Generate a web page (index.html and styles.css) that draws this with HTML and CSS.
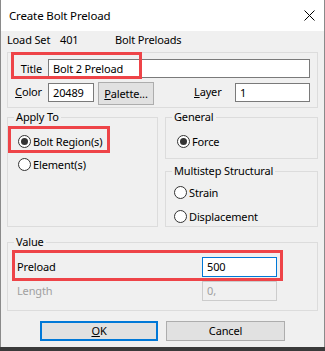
FILE: index.html
```html
<!DOCTYPE html>
<html>
<head>
<meta charset="utf-8">
<link rel="stylesheet" href="styles.css">
</head>
<body>
<div class="window">
  <div class="titlebar">
    <span class="title">Create Bolt Preload</span>
    <svg class="close" width="11" height="11" viewBox="0 0 11 11"><path d="M0.5 0.5 L10.5 10.5 M10.5 0.5 L0.5 10.5" stroke="#000" stroke-width="1" fill="none"/></svg>
  </div>
  <div class="content">
    <div class="loadset">
      <span class="ls-label">Load Set</span>
      <span class="ls-id">401</span>
      <span class="ls-name">Bolt Preloads</span>
    </div>

    <div class="group main-group">
      <div class="row title-row">
        <span class="lbl">Title</span>
        <div class="edit title-edit">Bolt 2 Preload</div>
      </div>
      <div class="row color-row">
        <span class="lbl"><u>C</u>olor</span>
        <div class="edit color-edit">20489</div>
        <div class="btn palette"><u>P</u>alette...</div>
        <span class="layer-lbl"><u>L</u>ayer</span>
        <div class="edit layer-edit">1</div>
      </div>
    </div>

    <div class="cols">
      <div class="group apply">
        <span class="legend">Apply To</span>
        <div class="radio-row"><span class="radio checked"></span><span>Bolt Region(s)</span></div>
        <div class="radio-row"><span class="radio"></span><span>Element(s)</span></div>
      </div>
      <div class="right-col">
        <div class="group general">
          <span class="legend">General</span>
          <div class="radio-row"><span class="radio checked"></span><span>Force</span></div>
        </div>
        <div class="group multistep">
          <span class="legend">Multistep Structural</span>
          <div class="radio-row"><span class="radio"></span><span>Strain</span></div>
          <div class="radio-row"><span class="radio"></span><span>Displacement</span></div>
        </div>
      </div>
    </div>

    <div class="group value">
      <span class="legend">Value</span>
      <div class="val-row">
        <span class="val-lbl">Preload</span>
        <div class="edit val-edit focused">500</div>
      </div>
      <div class="val-row len-row">
        <span class="val-lbl disabled">Length</span>
        <div class="edit val-edit disabled-edit">0,</div>
      </div>
    </div>

    <div class="buttons">
      <div class="btn ok default"><u>O</u>K</div>
      <div class="btn cancel">Cancel</div>
    </div>
  </div>

  <div class="mark mark-title"></div>
  <div class="mark mark-bolt"></div>
  <div class="mark mark-preload"></div>
</div>
</body>
</html>
```

FILE: styles.css
```css
* { box-sizing: border-box; }
html, body { margin: 0; padding: 0; }
body {
  width: 325px;
  height: 351px;
  background: #3a3a3a;
  font-family: "Noto Sans", "DejaVu Sans", sans-serif;
  font-size: 11px;
  letter-spacing: -0.15px;
  color: #000;
  overflow: hidden;
}
.window {
  position: relative;
  width: 325px;
  height: 347px;
  background: #f0f0f0;
  border-left: 1px solid #8a8a8a;
  border-right: 1px solid #8a8a8a;
}
.titlebar {
  height: 31px;
  background: #fff;
  display: flex;
  align-items: center;
  padding-left: 8px;
  padding-right: 9px;
}
.title { flex: 1; line-height: 16px; font-size: 11.5px; }
.close { display: block; }

.content { padding: 1px 6px 0 6px; }

.loadset { display: flex; height: 16px; line-height: 16px; }
.ls-label { width: 53px; }
.ls-id { width: 55px; }

.group {
  position: relative;
  border: 1px solid #dcdcdc;
}
.legend {
  position: absolute;
  top: -9px;
  left: 6px;
  padding: 0 2px;
  line-height: 16px;
  background: #f0f0f0;
}

.main-group {
  margin-top: 4px;
  width: 311px;
  height: 56px;
  padding-top: 6px;
}
.row { display: flex; }
.title-row { height: 19px; align-items: center; }
.lbl {
  width: 34px;
  margin-right: 6px;
  text-align: right;
  line-height: 16px;
}
.edit {
  background: #fff;
  border: 1px solid #7a7a7a;
  height: 19px;
  line-height: 17px;
  padding-left: 4px;
  white-space: nowrap;
}
.title-edit { width: 262px; }
.color-row { margin-top: 4px; height: 23px; align-items: flex-start; }
.color-row .lbl { margin-top: 2px; }
.color-edit { width: 46px; margin-top: 1px; margin-right: 4px; }
.btn {
  background: #e1e1e1;
  border: 1px solid #adadad;
  text-align: center;
  white-space: nowrap;
}
.palette { width: 56px; height: 23px; line-height: 21px; }
.layer-lbl { width: 41px; margin-left: 40px; margin-top: 2px; line-height: 16px; }
.layer-edit { width: 75px; margin-top: 1px; }

.cols { display: flex; margin-top: 9px; }
.apply {
  width: 151px;
  height: 110px;
  padding: 12px 0 0 10px;
}
.right-col { margin-left: 7px; width: 153px; }
.general {
  height: 42px;
  padding: 12px 0 0 11px;
}
.multistep {
  margin-top: 12px;
  height: 56px;
  padding: 9px 0 0 8px;
}
.radio-row {
  display: flex;
  align-items: center;
  height: 23px;
}
.multistep .radio-row { height: 22px; margin-bottom: 2px; }
.radio {
  width: 13px;
  height: 13px;
  border-radius: 50%;
  border: 1px solid #333;
  background: #fff;
  margin-right: 2px;
  position: relative;
  flex: none;
}
.radio.checked::after {
  content: "";
  position: absolute;
  left: 2px;
  top: 2px;
  width: 7px;
  height: 7px;
  border-radius: 50%;
  background: #333;
}

.value {
  margin-top: 15px;
  width: 311px;
  height: 69px;
  padding: 14px 0 0 9px;
}
.val-row { display: flex; align-items: center; height: 20px; }
.len-row { margin-top: 4px; }
.val-lbl { width: 185px; line-height: 16px; }
.val-edit { width: 75px; height: 20px; line-height: 18px; }
.focused { border-color: #0078d7; }
.disabled { color: #a0a0a0; }
.disabled-edit { background: #f0f0f0; border-color: #cccccc; color: #a0a0a0; }

.buttons { display: flex; margin-top: 10px; padding-left: 33px; }
.ok { width: 118px; height: 20px; line-height: 18px; }
.default { border: 2px solid #0078d7; line-height: 16px; }
.cancel { width: 119px; height: 20px; line-height: 18px; margin-left: 8px; }

.mark {
  position: absolute;
  border: 3px solid #ee4448;
}
.mark-title { left: 10px; top: 52px; width: 131px; height: 27px; }
.mark-bolt { left: 7px; top: 126px; width: 102px; height: 27px; }
.mark-preload { left: 11px; top: 250px; width: 271px; height: 31px; }
```
